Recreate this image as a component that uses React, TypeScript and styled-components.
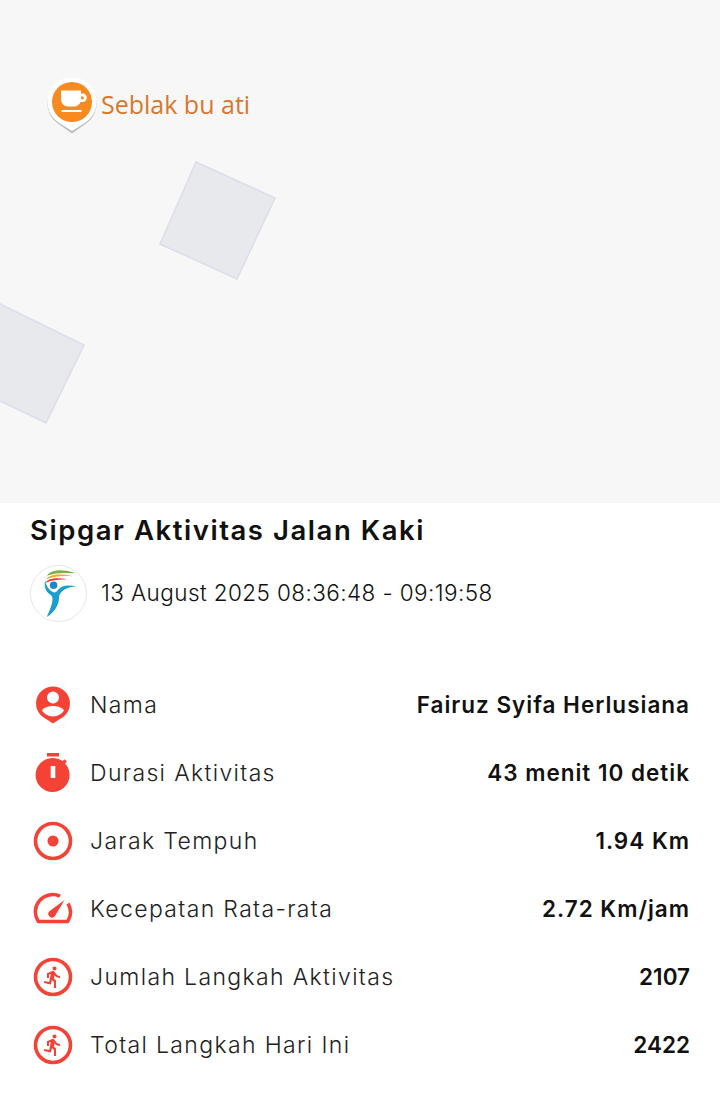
import React from 'react'
import styled, { createGlobalStyle } from 'styled-components'

const GlobalStyle = createGlobalStyle`
  html, body {
    margin: 0;
    padding: 0;
    background: #ffffff;
  }
`

const Page = styled.div`
  width: 720px;
  height: 1120px;
  background: #ffffff;
  overflow: hidden;
  font-family: "Inter", "Open Sans", sans-serif;
`

const MapArea = styled.div`
  position: relative;
  height: 503px;
  background: #f7f7f8;
`

const MapShapes = styled.svg`
  display: block;
  width: 720px;
  height: 503px;
`

const Marker = styled.div`
  position: absolute;
  left: 46px;
  top: 76px;
  display: flex;
  align-items: flex-start;
  gap: 3px;
`

const MarkerLabel = styled.span`
  margin-top: 13px;
  font-family: "Open Sans", sans-serif;
  font-size: 25px;
  line-height: 30px;
  color: #d9772c;
  white-space: nowrap;
`

const Content = styled.div`
  padding: 0 30px;
`

const Title = styled.h1`
  margin: 0;
  padding-top: 11px;
  font-size: 27.5px;
  line-height: 32px;
  font-weight: 600;
  letter-spacing: 1.55px;
  color: #111111;
`

const DateRow = styled.div`
  display: flex;
  align-items: center;
  gap: 14px;
  margin-top: 19px;
  margin-bottom: 49px;
`

const Logo = styled.svg`
  display: block;
  width: 57px;
  height: 57px;
  flex: none;
`

const DateText = styled.span`
  margin-top: -2px;
  font-size: 22.5px;
  font-weight: 300;
  letter-spacing: 0.41px;
  color: #111111;
`

const Row = styled.div`
  display: flex;
  align-items: center;
  justify-content: space-between;
  height: 68px;
`

const RowLeft = styled.div`
  display: flex;
  align-items: center;
  gap: 15px;
`

const IconBox = styled.svg`
  display: block;
  width: 44px;
  height: 44px;
  flex: none;
  margin-left: 1px;
  fill: #f44336;
`

const RowLabel = styled.span`
  margin-top: -1px;
  font-size: 23px;
  font-weight: 300;
  letter-spacing: 1.35px;
  color: #222222;
`

const RowValue = styled.span<{ $digits?: boolean }>`
  margin-top: -1px;
  font-size: 22.5px;
  font-weight: 600;
  letter-spacing: ${(p) => (p.$digits ? '0' : '1px')};
  color: #111111;
`

const Person = () => (
  <IconBox viewBox="0 0 44 44">
    <path fillRule="evenodd" d="M22 3.500a17 17 0 0 1 6 32.900L22 40.500l-6-4.100A17 17 0 0 1 22 3.500Zm0 5a6 6 0 1 0 0 12 6 6 0 0 0 0-12Zm0 14.500c-5.500 0-10 2.200-11 4.600 2.400 3.600 6.400 5.900 11 5.900s8.600-2.300 11-5.900C32 25.200 27.500 23 22 23Z" />
  </IconBox>
)

const Stopwatch = () => (
  <IconBox viewBox="0 0 44 44">
    <path fillRule="evenodd" d="M16 2h12v3.500H16ZM22 7a17 17 0 0 1 9.700 3.100l1.800-1.900 2.400 2.400-1.800 1.900A17 17 0 1 1 22 7Zm-2.300 8v12h4.600V15Z" />
  </IconBox>
)

const Target = () => (
  <IconBox viewBox="0 0 44 44">
    <circle cx="22" cy="22" r="17.500" fill="none" stroke="#f44336" strokeWidth="3.600" />
    <circle cx="22" cy="22" r="5.500" />
  </IconBox>
)

const Gauge = () => (
  <IconBox viewBox="0 0 44 44">
    <path d="M29 9.200A17.300 17.300 0 0 0 7.300 34.500h29.400A17.300 17.300 0 0 0 37 16.500" fill="none" stroke="#f44336" strokeWidth="3.500" strokeLinejoin="round" />
    <path d="M33.500 13 23.800 29.300a3.700 3.700 0 1 1-5.400-5.100Z" />
  </IconBox>
)

const Runner = () => (
  <IconBox viewBox="0 0 44 44">
    <circle cx="22" cy="22" r="17.500" fill="none" stroke="#f44336" strokeWidth="3.600" />
    <path transform="translate(10 10)" d="M13.490 5.480c1.100 0 2-.9 2-2s-.9-2-2-2-2 .9-2 2 .9 2 2 2zm-3.600 13.900l1-4.400 2.100 2v6h2v-7.500l-2.100-2 .6-3c1.300 1.500 3.300 2.500 5.500 2.500v-2c-1.900 0-3.500-1-4.300-2.400l-1-1.600c-.4-.6-1-1-1.700-1-.3 0-.5.1-.8.1l-5.200 2.200v4.700h2v-3.400l1.800-.7-1.600 8.100-4.900-1-.4 2 7 1.400z" />
  </IconBox>
)

const stats = [
  { icon: <Person />, label: 'Nama', value: 'Fairuz Syifa Herlusiana' },
  { icon: <Stopwatch />, label: 'Durasi Aktivitas', value: '43 menit 10 detik' },
  { icon: <Target />, label: 'Jarak Tempuh', value: '1.94 Km' },
  { icon: <Gauge />, label: 'Kecepatan Rata-rata', value: '2.72 Km/jam' },
  { icon: <Runner />, label: 'Jumlah Langkah Aktivitas', value: '2107', digits: true },
  { icon: <Runner />, label: 'Total Langkah Hari Ini', value: '2422', digits: true },
]

function App() {
  return (
    <Page>
      <GlobalStyle />
      <MapArea>
        <MapShapes viewBox="0 0 720 503">
          <polygon points="196,162 275,198 237,279 160,244" fill="#e8e9ed" stroke="#dcdde9" strokeWidth="1.500" />
          <polygon points="-10,299 84,345 46,423 -10,396" fill="#e8e9ed" stroke="#dcdde9" strokeWidth="1.500" />
        </MapShapes>
        <Marker>
          <svg width="52" height="60" viewBox="0 0 52 60">
            <path d="M26 1.500a24.500 24.500 0 0 1 12 45.900L26 56 14 47.400A24.500 24.500 0 0 1 26 1.500Z" fill="#bdbdbd" transform="translate(0 1.500)" />
            <path d="M26 1.500a24.500 24.500 0 0 1 12 45.900L26 55 14 47.400A24.500 24.500 0 0 1 26 1.500Z" fill="#ffffff" />
            <circle cx="26" cy="26" r="20" fill="#f98a20" />
            <path fillRule="evenodd" d="M15 14.500h20v3h1.500c2.700 0 4.300 1.800 4.300 4.200s-1.600 4.300-4.300 4.300h-2a7 7 0 0 1-6.500 4.500h-6a7 7 0 0 1-7-7Zm20 6v2.800h1.300c.9 0 1.500-.6 1.500-1.400s-.6-1.400-1.500-1.400ZM15.500 34h20v2h-20Z" fill="#ffffff" />
          </svg>
          <MarkerLabel>Seblak bu ati</MarkerLabel>
        </Marker>
      </MapArea>
      <Content>
        <Title>Sipgar Aktivitas Jalan Kaki</Title>
        <DateRow>
          <Logo viewBox="0 0 58 58">
            <circle cx="29" cy="29" r="28.500" fill="#ffffff" stroke="#e6e6e6" />
            <path d="M17 11C21 5 32 3 47 8.500 37 8 27 7.500 17 11Z" fill="#7cb342" />
            <path d="M16.500 14.500C19 10 30 8 44 11.500 34 11 24 11 16.500 14.500Z" fill="#f9a825" />
            <path d="M16 18C17 14 27 12 38 14.500 30 14.500 22 15.500 16 18Z" fill="#e53935" />
            <circle cx="24" cy="20.500" r="3.800" fill="#1f88c9" />
            <path d="M15.500 15.500C14 21 15.500 27 21 30.500 24 32.500 24 38 17 53 25 48 30 40 29.500 32.500 30.500 26.500 38 22 47.500 22 38 19.500 31 21 28 26 26.500 28.500 24 28.500 21.500 26.500 18 23.500 16 20 15.500 15.500Z" fill="#1a9fd0" />
          </Logo>
          <DateText>13 August 2025 08:36:48 - 09:19:58</DateText>
        </DateRow>
        {stats.map((item) => (
          <Row key={item.label}>
            <RowLeft>
              {item.icon}
              <RowLabel>{item.label}</RowLabel>
            </RowLeft>
            <RowValue $digits={item.digits}>{item.value}</RowValue>
          </Row>
        ))}
      </Content>
    </Page>
  )
}

export default App
